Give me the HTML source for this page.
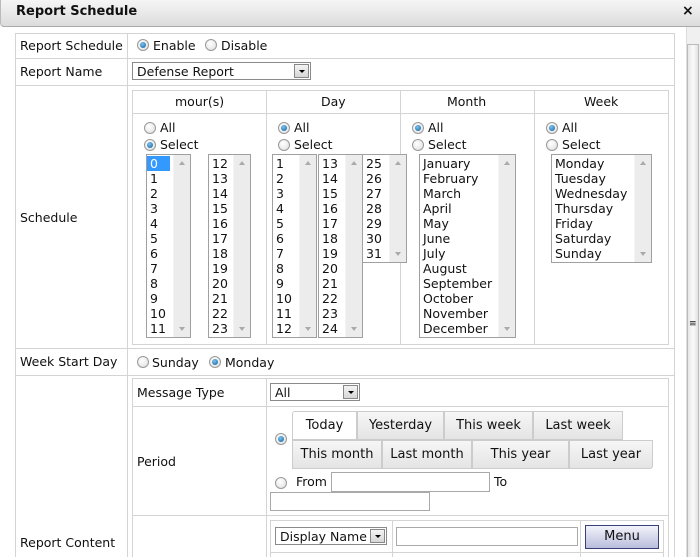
<!DOCTYPE html>
<html style="height:557px;overflow:hidden"><head><style>
*{margin:0;padding:0;box-sizing:border-box}
html,body{overflow:hidden}
body{width:700px;height:557px;overflow:hidden;background:#fff;font-family:"DejaVu Sans","Liberation Sans",sans-serif;font-size:12.5px;color:#111;position:relative}
.a{position:absolute}
.t{position:absolute;white-space:nowrap;line-height:15px;margin-top:0px}
.b{position:absolute;border:1px solid #d4d4d4}
.r{position:absolute;width:12px;height:12px;border-radius:50%;border:1px solid #999;background:radial-gradient(circle at 40% 35%,#fff,#ddd)}
.r.on::after{content:"";position:absolute;left:2px;top:2px;width:6px;height:6px;border-radius:50%;background:radial-gradient(circle at 40% 35%,#7ec3ee,#0a5f9c)}
.lb{position:absolute;border:1px solid #a0a0a0;background:#fff;overflow:hidden}
.lb .sb{position:absolute;right:0;top:0;bottom:0;width:17px;background:#ececec;border-left:1px solid #f4f4f4}
.lb .sb::before{content:"";position:absolute;left:5px;top:6px;border:3px solid transparent;border-bottom:4px solid #aaa;border-top:0}
.lb .sb::after{content:"";position:absolute;left:5px;bottom:6px;border:3px solid transparent;border-top:4px solid #aaa;border-bottom:0}
.lb div.it{line-height:15px;padding-left:3px;white-space:nowrap}
.sel{position:absolute;border:1px solid #8a8a8a;background:#fff;height:18px;overflow:hidden}
.sel .ar{position:absolute;right:1px;top:1px;width:15px;height:14px;background:linear-gradient(#f4f4f4,#d6d6d6);border:1px solid #888}
.sel .ar::after{content:"";position:absolute;left:4px;top:5px;border:3px solid transparent;border-top:3px solid #000;border-bottom:0}
.btn{position:absolute;border:1px solid #ccc;background:linear-gradient(#f6f6f6,#e4e4e4);text-align:center;line-height:27px;font-size:13px}
.in{position:absolute;border:1px solid #a9a9a9;background:#fff}
</style></head><body>
<div class="a" style="left:0;top:0;width:700px;height:27px;background:linear-gradient(#f5f5f5,#dcdcdc);border-bottom:1px solid #aaa;border-left:1px solid #bbb;border-radius:0 0 0 4px"></div>
<div class="t" style="left:16px;top:4px;font-weight:bold;font-size:13px">Report Schedule</div>
<div class="t" style="left:682px;top:4px;font-weight:bold;font-size:14px">×</div>
<div class="a" style="left:686px;top:27px;width:14px;height:530px;background:#f0f0f0;border-left:1px solid #ddd"></div>
<div class="a" style="left:687px;top:44px;width:12px;height:513px;background:linear-gradient(90deg,#e6e6e6,#fafafa,#e2e2e2);border:1px solid #bbb;border-bottom:0"></div>
<div class="t" style="left:689px;top:322px;font-size:9px;line-height:4px">≡</div>
<div class="b" style="left:15px;top:33px;width:660px;height:524px;border-bottom:0"></div>
<div class="a" style="left:127px;top:33px;width:1px;height:524px;background:#d4d4d4"></div>
<div class="a" style="left:15px;top:58px;width:660px;height:1px;background:#d4d4d4"></div>
<div class="a" style="left:15px;top:85px;width:660px;height:1px;background:#d4d4d4"></div>
<div class="a" style="left:15px;top:348px;width:660px;height:1px;background:#d4d4d4"></div>
<div class="a" style="left:15px;top:375px;width:660px;height:1px;background:#d4d4d4"></div>
<div class="t" style="left:20px;top:38px">Report Schedule</div>
<div class="t" style="left:20px;top:64px">Report Name</div>
<div class="t" style="left:20px;top:210px">Schedule</div>
<div class="t" style="left:20px;top:354px">Week Start Day</div>
<div class="t" style="left:20px;top:535px">Report Content</div>
<div class="r on" style="left:137px;top:39px"></div><div class="t" style="left:153px;top:38px">Enable</div>
<div class="r" style="left:205px;top:39px"></div><div class="t" style="left:221px;top:38px">Disable</div>
<div class="sel" style="left:132px;top:62px;width:179px"><div class="t" style="left:4px;top:1px">Defense Report</div><div class="ar"></div></div>
<div class="b" style="left:132px;top:90px;width:537px;height:255px"></div>
<div class="a" style="left:132px;top:113px;width:537px;height:1px;background:#d4d4d4"></div>
<div class="a" style="left:266px;top:90px;width:1px;height:255px;background:#d4d4d4"></div>
<div class="a" style="left:400px;top:90px;width:1px;height:255px;background:#d4d4d4"></div>
<div class="a" style="left:534px;top:90px;width:1px;height:255px;background:#d4d4d4"></div>
<div class="t" style="left:175px;top:94px">mour(s)</div>
<div class="t" style="left:321px;top:94px">Day</div>
<div class="t" style="left:447px;top:94px">Month</div>
<div class="t" style="left:584px;top:94px">Week</div>
<div class="r" style="left:144px;top:122px"></div><div class="t" style="left:160px;top:120px">All</div>
<div class="r on" style="left:144px;top:139px"></div><div class="t" style="left:160px;top:137px">Select</div>
<div class="r on" style="left:278px;top:122px"></div><div class="t" style="left:294px;top:120px">All</div>
<div class="r" style="left:278px;top:139px"></div><div class="t" style="left:294px;top:137px">Select</div>
<div class="r on" style="left:412px;top:122px"></div><div class="t" style="left:428px;top:120px">All</div>
<div class="r" style="left:412px;top:139px"></div><div class="t" style="left:428px;top:137px">Select</div>
<div class="r on" style="left:546px;top:122px"></div><div class="t" style="left:562px;top:120px">All</div>
<div class="r" style="left:546px;top:139px"></div><div class="t" style="left:562px;top:137px">Select</div>
<div class="lb" style="left:146px;top:154px;width:45px;height:184px;padding-top:1px"><div class="it"><span style="background:#39f;color:#fff;padding:0 12px 0 3px;margin-left:-3px">0</span></div><div class="it">1</div><div class="it">2</div><div class="it">3</div><div class="it">4</div><div class="it">5</div><div class="it">6</div><div class="it">7</div><div class="it">8</div><div class="it">9</div><div class="it">10</div><div class="it">11</div><div class="sb"></div></div>
<div class="lb" style="left:208px;top:154px;width:43px;height:184px;padding-top:1px"><div class="it">12</div><div class="it">13</div><div class="it">14</div><div class="it">15</div><div class="it">16</div><div class="it">17</div><div class="it">18</div><div class="it">19</div><div class="it">20</div><div class="it">21</div><div class="it">22</div><div class="it">23</div><div class="sb"></div></div>
<div class="lb" style="left:272px;top:154px;width:45px;height:184px;padding-top:1px"><div class="it">1</div><div class="it">2</div><div class="it">3</div><div class="it">4</div><div class="it">5</div><div class="it">6</div><div class="it">7</div><div class="it">8</div><div class="it">9</div><div class="it">10</div><div class="it">11</div><div class="it">12</div><div class="sb"></div></div>
<div class="lb" style="left:318px;top:154px;width:45px;height:184px;padding-top:1px"><div class="it">13</div><div class="it">14</div><div class="it">15</div><div class="it">16</div><div class="it">17</div><div class="it">18</div><div class="it">19</div><div class="it">20</div><div class="it">21</div><div class="it">22</div><div class="it">23</div><div class="it">24</div><div class="sb"></div></div>
<div class="lb" style="left:362px;top:154px;width:45px;height:109px;padding-top:1px"><div class="it">25</div><div class="it">26</div><div class="it">27</div><div class="it">28</div><div class="it">29</div><div class="it">30</div><div class="it">31</div><div class="sb"></div></div>
<div class="lb" style="left:419px;top:154px;width:97px;height:184px;padding-top:1px"><div class="it">January</div><div class="it">February</div><div class="it">March</div><div class="it">April</div><div class="it">May</div><div class="it">June</div><div class="it">July</div><div class="it">August</div><div class="it">September</div><div class="it">October</div><div class="it">November</div><div class="it">December</div><div class="sb"></div></div>
<div class="lb" style="left:551px;top:154px;width:101px;height:109px;padding-top:1px"><div class="it">Monday</div><div class="it">Tuesday</div><div class="it">Wednesday</div><div class="it">Thursday</div><div class="it">Friday</div><div class="it">Saturday</div><div class="it">Sunday</div><div class="sb"></div></div>
<div class="r" style="left:137px;top:356px"></div><div class="t" style="left:152px;top:355px">Sunday</div>
<div class="r on" style="left:209px;top:356px"></div><div class="t" style="left:225px;top:355px">Monday</div>
<div class="b" style="left:132px;top:378px;width:537px;height:179px;border-bottom:0"></div>
<div class="a" style="left:266px;top:378px;width:1px;height:179px;background:#d4d4d4"></div>
<div class="a" style="left:132px;top:406px;width:537px;height:1px;background:#d4d4d4"></div>
<div class="a" style="left:132px;top:515px;width:537px;height:1px;background:#d4d4d4"></div>
<div class="t" style="left:137px;top:385px">Message Type</div>
<div class="sel" style="left:270px;top:383px;width:90px"><div class="t" style="left:4px;top:1px">All</div><div class="ar"></div></div>
<div class="t" style="left:137px;top:454px">Period</div>
<div class="r on" style="left:275px;top:433px"></div>
<div class="btn" style="left:292px;top:411px;width:65px;background:#fff;border-radius:3px 0 0 0">Today</div>
<div class="btn" style="left:357px;top:411px;width:87px">Yesterday</div>
<div class="btn" style="left:444px;top:411px;width:89px">This week</div>
<div class="btn" style="left:533px;top:411px;width:90px">Last week</div>
<div class="btn" style="left:292px;top:440px;width:90px">This month</div>
<div class="btn" style="left:382px;top:440px;width:90px">Last month</div>
<div class="btn" style="left:472px;top:440px;width:97px">This year</div>
<div class="btn" style="left:569px;top:440px;width:84px;border-radius:0 0 3px 0">Last year</div>
<div class="r" style="left:275px;top:477px"></div><div class="t" style="left:296px;top:474px">From</div>
<div class="in" style="left:331px;top:472px;width:159px;height:20px"></div>
<div class="t" style="left:494px;top:474px">To</div>
<div class="in" style="left:270px;top:492px;width:160px;height:19px"></div>
<div class="b" style="left:270px;top:520px;width:394px;height:37px;border-bottom:0"></div>
<div class="a" style="left:270px;top:552px;width:394px;height:1px;background:#d4d4d4"></div>
<div class="a" style="left:392px;top:520px;width:1px;height:37px;background:#d4d4d4"></div>
<div class="a" style="left:580px;top:520px;width:1px;height:37px;background:#d4d4d4"></div>
<div class="sel" style="left:275px;top:527px;width:112px"><div class="t" style="left:4px;top:1px">Display Name</div><div class="ar"></div></div>
<div class="in" style="left:396px;top:527px;width:182px;height:19px"></div>
<div class="a" style="left:585px;top:525px;width:74px;height:24px;border:1px solid #3a3f7a;background:linear-gradient(#f2f3fb,#b9bddb);text-align:center;line-height:22px;font-size:13px">Menu</div>
</body></html>
